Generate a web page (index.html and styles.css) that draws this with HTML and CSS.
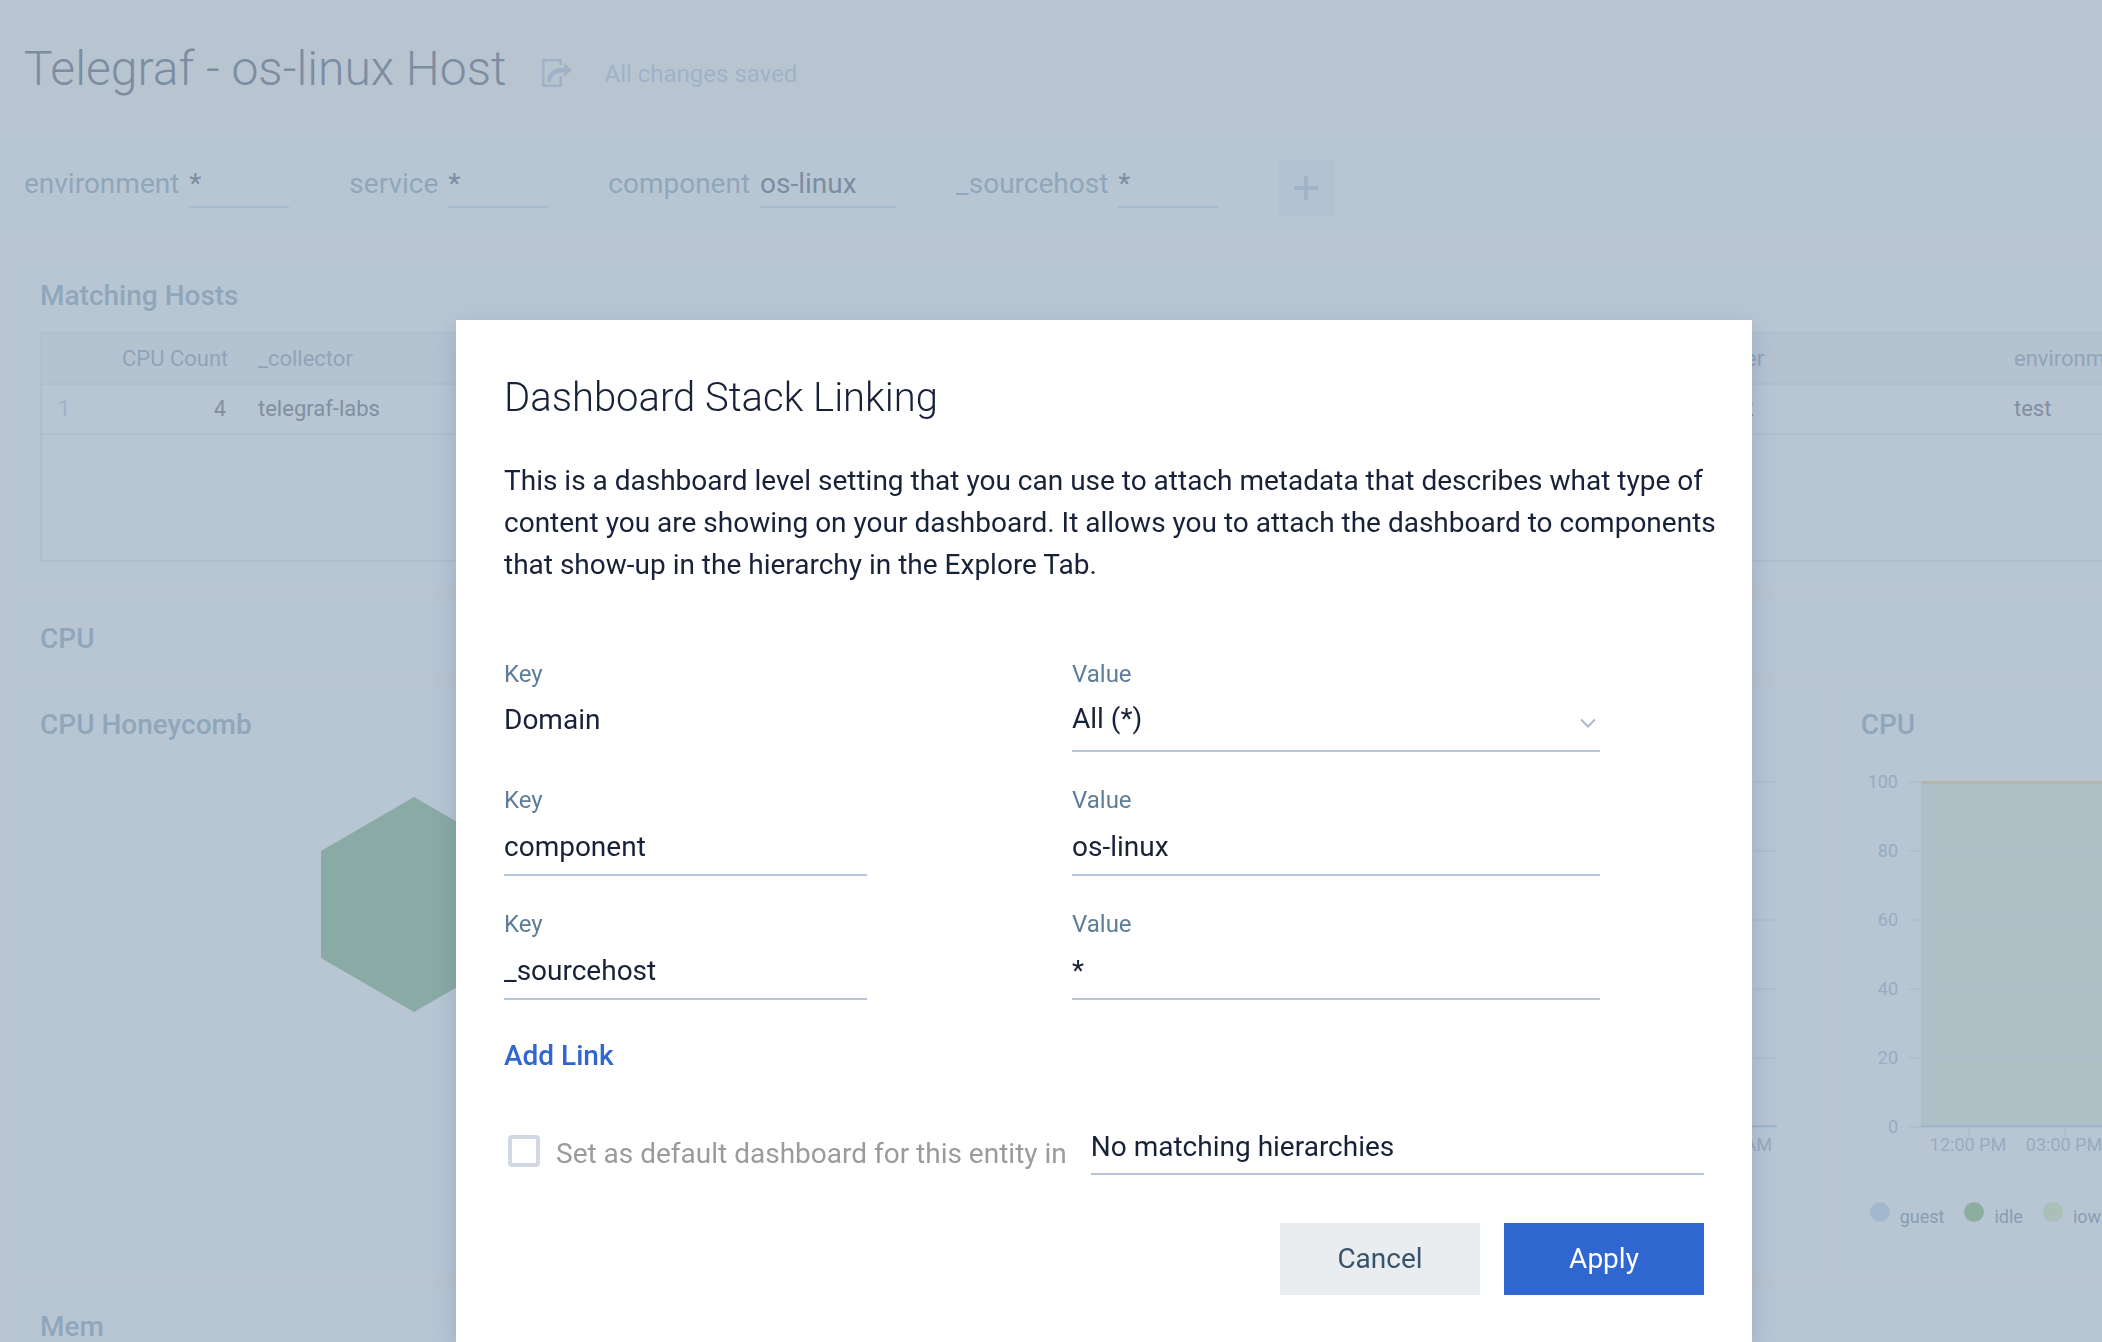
FILE: index.html
```html
<!DOCTYPE html>
<html lang="en">
<head>
<meta charset="utf-8">
<meta name="viewport" content="width=device-width, initial-scale=1">
<title>Telegraf - os-linux Host</title>
<link rel="stylesheet" href="styles.css">
</head>
<body>
<div class="page">
  <header class="header">
    <h1 class="header-title">Telegraf - os-linux Host</h1>
    <button class="icon-button" type="button" aria-label="Share">
      <svg width="30" height="28" viewBox="0 0 30 28" aria-hidden="true">
        <path d="M18.700 6V1.300H1.300V26.700H18.700V17" fill="none" stroke="currentColor" stroke-width="2.600"/>
        <path d="M22 4L30 11L22 18V13.500C14.500 12.800 9.500 16 9 23H5C5 14 11.500 8.500 22 8.800Z" fill="currentColor"/>
      </svg>
    </button>
    <span class="header-status">All changes saved</span>
  </header>

  <form class="filters">
    <div class="filter"><label for="f-env">environment</label><input id="f-env" type="text" value="*"></div>
    <div class="filter"><label for="f-service">service</label><input id="f-service" type="text" value="*"></div>
    <div class="filter filter-wide"><label for="f-component">component</label><input id="f-component" type="text" value="os-linux"></div>
    <div class="filter"><label for="f-host">_sourcehost</label><input id="f-host" type="text" value="*"></div>
    <button class="add-filter" type="button" aria-label="Add filter">
      <svg width="24" height="24" viewBox="0 0 24 24" aria-hidden="true"><path d="M12 0V24M0 12H24" stroke="currentColor" stroke-width="4"/></svg>
    </button>
  </form>

  <main class="dashboard">
    <section class="panel panel-full">
      <h2>Matching Hosts</h2>
      <div class="hosts">
        <table>
          <thead>
            <tr><th class="col-index"></th><th class="col-count">CPU Count</th><th>_collector</th><th class="col-dc">datacenter</th><th class="col-env">environment</th></tr>
          </thead>
          <tbody>
            <tr><td class="col-index">1</td><td class="col-count">4</td><td>telegraf-labs</td><td class="col-dc">us-west-2</td><td class="col-env">test</td></tr>
          </tbody>
        </table>
      </div>
    </section>

    <section class="panel panel-full panel-section"><h2>CPU</h2></section>

    <section class="panel">
      <h2>CPU Honeycomb</h2>
      <svg class="honeycomb" width="186" height="215" viewBox="0 0 186 215" aria-hidden="true"><path d="M93 0L186 54V161L93 215L0 161V54Z"/></svg>
    </section>

    <section class="panel panel-chart" aria-label="CPU history">
      <svg class="chart chart-history" width="100%" height="474" aria-hidden="true">
        <g class="grid">
          <line x1="0" x2="100%" y1="95" y2="95"/><line x1="0" x2="100%" y1="164" y2="164"/><line x1="0" x2="100%" y1="233" y2="233"/><line x1="0" x2="100%" y1="302" y2="302"/><line x1="0" x2="100%" y1="371" y2="371"/><line x1="0" x2="100%" y1="440" y2="440"/>
        </g>
        <line class="series" x1="0" x2="100%" y1="439" y2="439"/>
        <text x="100%" y="464" dx="-5" text-anchor="end">09:00 AM</text>
      </svg>
    </section>

    <section class="panel">
      <h2>CPU</h2>
      <svg class="chart" width="100%" height="419" aria-label="CPU usage">
        <rect class="area" x="60" y="41" width="100%" height="345"/>
        <g class="grid">
          <line x1="48" x2="100%" y1="41" y2="41"/><line x1="48" x2="100%" y1="110" y2="110"/><line x1="48" x2="100%" y1="179" y2="179"/><line x1="48" x2="100%" y1="248" y2="248"/><line x1="48" x2="100%" y1="317" y2="317"/><line x1="48" x2="100%" y1="386" y2="386"/>
          <line x1="108" x2="108" y1="387" y2="396"/><line x1="204" x2="204" y1="387" y2="396"/>
        </g>
        <rect class="peak" x="60" y="40" width="100%" height="3"/>
        <line class="series" x1="60" x2="100%" y1="385" y2="385"/>
        <g text-anchor="end">
          <text x="37" y="47">100</text><text x="37" y="116">80</text><text x="37" y="185">60</text><text x="37" y="254">40</text><text x="37" y="323">20</text><text x="37" y="392">0</text>
        </g>
        <g text-anchor="middle"><text x="107" y="410">12:00 PM</text><text x="203" y="410">03:00 PM</text></g>
      </svg>
      <ul class="legend">
        <li class="guest">guest</li><li class="idle">idle</li><li class="iowait">iowait</li>
      </ul>
    </section>

    <section class="panel panel-full panel-section"><h2>Mem</h2></section>
  </main>
</div>

<div class="backdrop">
  <form class="dialog" role="dialog" aria-labelledby="dialog-title">
    <h2 id="dialog-title">Dashboard Stack Linking</h2>
    <p>This is a dashboard level setting that you can use to attach metadata that describes what type of content you are showing on your dashboard. It allows you to attach the dashboard to components that show-up in the hierarchy in the Explore Tab.</p>

    <div class="links">
      <div class="field">
        <span class="field-label">Key</span>
        <span class="field-static">Domain</span>
      </div>
      <div class="field">
        <label class="field-label" for="domain">Value</label>
        <div class="select">
          <select id="domain"><option>All (*)</option></select>
          <svg class="chevron" width="16" height="10" viewBox="0 0 16 10" aria-hidden="true"><path d="M1 1.500L8 8.500L15 1.500" fill="none" stroke="currentColor" stroke-width="2"/></svg>
        </div>
      </div>
      <div class="field"><label class="field-label" for="key-1">Key</label><input id="key-1" type="text" value="component"></div>
      <div class="field"><label class="field-label" for="value-1">Value</label><input id="value-1" type="text" value="os-linux"></div>
      <div class="field"><label class="field-label" for="key-2">Key</label><input id="key-2" type="text" value="_sourcehost"></div>
      <div class="field"><label class="field-label" for="value-2">Value</label><input id="value-2" type="text" value="*"></div>
    </div>

    <button class="add-link" type="button">Add Link</button>

    <div class="default-row">
      <input class="checkbox" id="set-default" type="checkbox">
      <label for="set-default">Set as default dashboard for this entity in</label>
      <input class="hierarchy" type="text" value="No matching hierarchies" aria-label="Hierarchy">
    </div>

    <div class="actions">
      <button class="button" type="button">Cancel</button>
      <button class="button button-primary" type="submit">Apply</button>
    </div>
  </form>
</div>
</body>
</html>
```
FILE: styles.css
```css
* { box-sizing: border-box; }

body {
  margin: 0;
  overflow: hidden;
  background: #b8c5d0;
  color: #172137;
  font-family: Roboto, "Liberation Sans", sans-serif;
  font-size: 28px;
  line-height: 32px;
}

h1, h2, p, ul { margin: 0; padding: 0; }

input, select, button {
  border: 0;
  border-radius: 0;
  padding: 0;
  background: none;
  color: inherit;
  font: inherit;
}

.page { height: 100vh; overflow: hidden; }

/* Header */
.header {
  display: flex;
  align-items: center;
  height: 133px;
  padding: 4px 24px 0;
}
.header-title {
  color: #7c8da2;
  font-size: 48px;
  font-weight: 300;
  line-height: 56px;
}
.icon-button { display: flex; margin: 8px 32px 0 36px; color: #9fb2c8; }
.header-status { margin-top: 10px; color: #9fb2c8; font-size: 24px; }

/* Filters */
.filters {
  display: flex;
  gap: 60px;
  height: 101px;
  padding: 27px 24px 0;
  background: #b8c6d4;
}
.filter { display: flex; gap: 10px; height: 48px; color: #8fa6bb; }
.filter label { padding-top: 8px; }
.filter input {
  width: 100px;
  padding-top: 2px;
  border-bottom: 2px solid #a8bacd;
  color: #7c8da2;
}
.filter-wide input { width: 136px; }
.add-filter {
  display: flex;
  align-items: center;
  justify-content: center;
  width: 56px;
  height: 56px;
  background: #b2c2d0;
  color: #a0b3c8;
}

/* Dashboard */
.dashboard {
  display: grid;
  grid-template-columns: minmax(0, 12fr) minmax(0, 15fr) minmax(0, 4fr);
  gap: 15px;
  padding: 24px 0 0 16px;
}
.panel {
  overflow: hidden;
  padding: 22px 0 17px 24px;
  background: #b8c6d4;
}
.panel-full { grid-column: 1 / -1; }
.panel-full:first-child { padding-bottom: 24px; }
.panel h2 {
  color: #8fa6bb;
  font-size: 28px;
  font-weight: 500;
  line-height: 32px;
}

.hosts {
  height: 230px;
  margin-top: 20px;
  border: 2px solid #b0bfce;
  border-right: 0;
  font-size: 22px;
}
.hosts table {
  width: 100%;
  border-collapse: collapse;
  table-layout: fixed;
}
.hosts th, .hosts td {
  height: 50px;
  padding: 0 16px;
  border-bottom: 2px solid #b0bfce;
  color: #828f9f;
  font-weight: 400;
  text-align: left;
  white-space: nowrap;
}
.hosts th { background: #b5c3d1; color: #8fa4b8; }
.hosts .col-index { width: 64px; color: #9fb2c8; }
.hosts .col-count { width: 136px; text-align: right; }
.hosts .col-dc { width: 355px; }
.hosts .col-env { width: 104px; }

.honeycomb { display: block; margin: 56px auto 0; fill: #8aaaa5; }
.panel:has(.honeycomb) { padding-right: 24px; }

.panel-chart { padding: 0 45px 0 24px; }
.chart { display: block; }
.chart text { fill: #98abc0; font-size: 18px; }
.chart .grid line { stroke: #b0bfce; stroke-width: 2; }
.chart .series { stroke: #8fabcb; stroke-width: 1; }
.chart .area { fill: #aec0c6; }
.chart .peak { fill: #b6b3a9; }

.legend {
  display: flex;
  gap: 20px;
  height: 22px;
  margin: 42px 0 33px;
  padding-left: 9px;
  color: #8a9cb2;
  font-size: 18px;
  line-height: 30px;
  list-style: none;
}
.legend li { display: flex; gap: 10px; }
.legend li::before {
  content: "";
  width: 20px;
  height: 20px;
  border-radius: 50%;
  background: #a2b8cf;
}
.legend .idle::before { background: #8cae9f; }
.legend .iowait::before { background: #a8c0b8; }

/* Dialog */
.backdrop {
  position: fixed;
  inset: 0;
  display: flex;
  padding: 320px 350px 0 456px;
  overflow: hidden;
}
.dialog {
  flex: 1;
  padding: 56px 48px;
  background: #fff;
  box-shadow: 0 8px 24px rgba(40, 70, 110, 0.2);
}
.dialog h2 {
  font-size: 40px;
  font-weight: 300;
  line-height: 44px;
}
.dialog p { margin: 40px -16px 0 0; line-height: 42px; }

.links {
  display: grid;
  grid-template-columns: minmax(0, 363fr) minmax(0, 528fr);
  column-gap: 205px;
  row-gap: 34px;
  margin-top: 74px;
  padding-right: 104px;
}
.field { display: flex; flex-direction: column; }
.field-label { color: #5d7d98; font-size: 24px; line-height: 28px; }
.field-static { padding-top: 16px; }
.field input, .select, .hierarchy { border-bottom: 2px solid #b5c6d8; }
.field input { height: 62px; padding-top: 4px; }
.select { display: flex; align-items: center; height: 64px; }
.select select { flex: 1; appearance: none; }
.chevron { margin: 8px 4px 0 0; color: #a9bacd; }

.add-link { display: block; margin-top: 40px; color: #2f66d0; font-weight: 500; }

.default-row { display: flex; align-items: center; margin-top: 51px; color: #9b9b9b; }
.default-row label { padding-top: 10px; }
.checkbox {
  appearance: none;
  width: 32px;
  height: 32px;
  margin: 4px 16px 0 4px;
  border: 4px solid #d0d9e1;
  border-radius: 4px;
}
.hierarchy { flex: 1; height: 52px; margin-left: 24px; padding-bottom: 4px; color: #172137; }

.actions { display: flex; justify-content: flex-end; gap: 24px; margin-top: 48px; }
.button { width: 200px; height: 72px; background: #e9edf0; color: #38546c; }
.button-primary { background: #2f66d0; color: #fff; }
```
